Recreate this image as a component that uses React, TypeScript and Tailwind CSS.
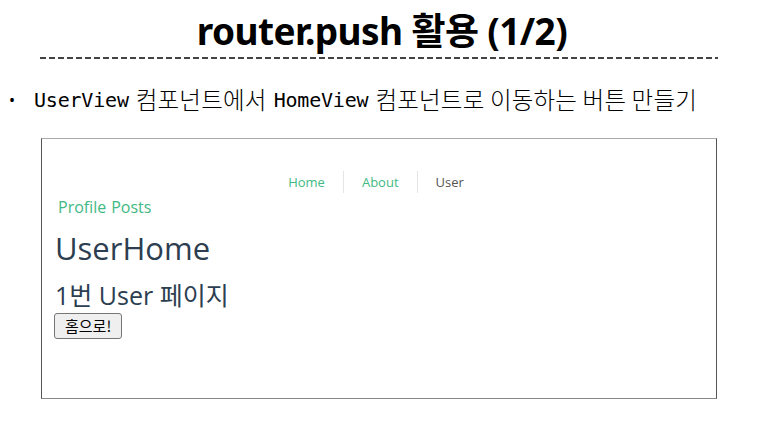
import React from "react";

export default function App() {
  return (
    <div className="w-[764px] h-[421px] bg-white overflow-hidden font-['Noto_Sans','Noto_Sans_CJK_KR',sans-serif]">
      <div className="pt-[7px] flex justify-center">
        <h1 className="text-[37px] leading-[48px] font-bold text-black tracking-[-0.6px]">
          router.push 활용 (1/2)
        </h1>
      </div>
      <div className="ml-[40px] mt-[2px] w-[678px] h-[2px] bg-[repeating-linear-gradient(to_right,#444_0_6px,transparent_6px_9px)]" />
      <div className="mt-[26px] flex items-center h-[30px] text-black">
        <span className="ml-[9px] w-[25px] text-[16px]">•</span>
        <span className="font-['DejaVu_Sans_Mono',monospace] text-[20px] tracking-[-0.2px]">UserView</span>
        <span className="ml-[7px] font-['Noto_Sans_CJK_KR',sans-serif] font-light text-[23.5px] tracking-[0.2px]">컴포넌트에서</span>
        <span className="ml-[7px] font-['DejaVu_Sans_Mono',monospace] text-[20px] tracking-[-0.2px]">HomeView</span>
        <span className="ml-[7px] font-['Noto_Sans_CJK_KR',sans-serif] font-light text-[23.5px] tracking-[0.2px] whitespace-pre">컴포넌트로 이동하는 버튼 만들기</span>
      </div>
      <div className="ml-[41px] mt-[23px] w-[676px] h-[261px] border border-t-[#aaa] border-l-[#555] border-r-[#555] border-b-[#888] flex flex-col font-['Open_Sans','Noto_Sans_CJK_KR',sans-serif]">
        <div className="mt-[32px] pr-[6px] flex justify-center items-center text-[13px] h-[22px]">
          <span className="text-[#42b983] pr-[18px] border-r border-[#e5e5e5] leading-[22px]">Home</span>
          <span className="text-[#42b983] px-[18px] border-r border-[#e5e5e5] leading-[22px]">About</span>
          <span className="text-[#555] pl-[18px] leading-[22px]">User</span>
        </div>
        <div className="ml-[16px] mt-[3px] text-[16px] text-[#42b983] leading-[22px] flex gap-[5px]">
          <span>Profile</span>
          <span>Posts</span>
        </div>
        <div className="ml-[13px] mt-[10px] text-[31px] leading-[40px] text-[#2c3e50]">
          UserHome
        </div>
        <div className="ml-[13px] mt-[10px] text-[25px] leading-[34px] text-[#2c3e50]">
          1번 User 페이지
        </div>
        <div className="ml-[12px] mt-[1px]">
          <button className="h-[26px] px-[10px] text-[15px] leading-[20px] text-black bg-[#efefef] border border-[#767676] rounded-[3px] font-['Noto_Sans_CJK_KR',sans-serif]">
            홈으로!
          </button>
        </div>
      </div>
    </div>
  );
}
